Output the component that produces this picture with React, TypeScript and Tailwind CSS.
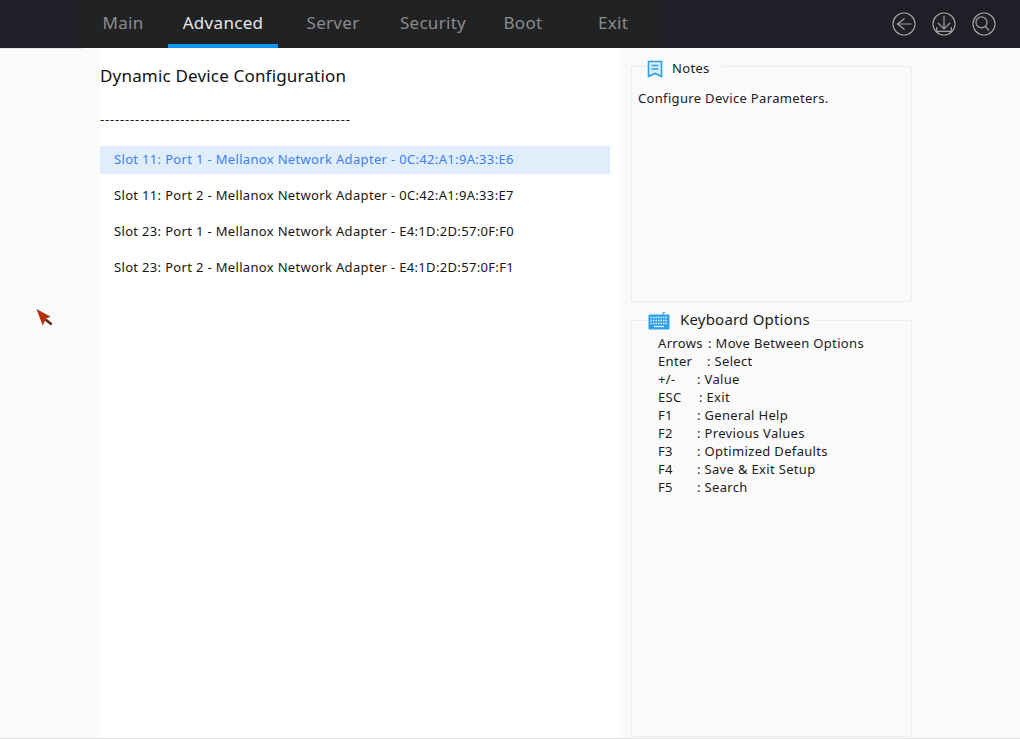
import React from 'react';

const tabs = ['Main', 'Advanced', 'Server', 'Security', 'Boot', 'Exit'];

const tabWidths: Record<string, string> = {
  Main: 'w-[90px]',
  Advanced: 'w-[110px]',
  Server: 'w-[110px]',
  Security: 'w-[90px]',
  Boot: 'w-[90px]',
  Exit: 'w-[90px]',
};

const devices = [
  'Slot 11: Port 1 - Mellanox Network Adapter - 0C:42:A1:9A:33:E6',
  'Slot 11: Port 2 - Mellanox Network Adapter - 0C:42:A1:9A:33:E7',
  'Slot 23: Port 1 - Mellanox Network Adapter - E4:1D:2D:57:0F:F0',
  'Slot 23: Port 2 - Mellanox Network Adapter - E4:1D:2D:57:0F:F1',
];

const keys = [
  { name: 'Arrows', desc: 'Move Between Options', width: 'w-[50px]' },
  { name: 'Enter', desc: 'Select', width: 'w-[49px]' },
  { name: '+/-', desc: 'Value', width: 'w-[39px]' },
  { name: 'ESC', desc: 'Exit', width: 'w-[41px]' },
  { name: 'F1', desc: 'General Help', width: 'w-[39px]' },
  { name: 'F2', desc: 'Previous Values', width: 'w-[39px]' },
  { name: 'F3', desc: 'Optimized Defaults', width: 'w-[39px]' },
  { name: 'F4', desc: 'Save & Exit Setup', width: 'w-[39px]' },
  { name: 'F5', desc: 'Search', width: 'w-[39px]' },
];

const BackIcon = () => (
  <svg width="24" height="24" viewBox="0 0 24 24" fill="none" stroke="#a0a0a2" strokeWidth="1.2">
    <circle cx="12" cy="12" r="11" />
    <path d="M12.5 6.5L5.5 12l7 5.5M5.5 12h14" />
  </svg>
);

const SaveIcon = () => (
  <svg width="24" height="24" viewBox="0 0 24 24" fill="none" stroke="#a0a0a2" strokeWidth="1.2">
    <circle cx="12" cy="12" r="11" />
    <path d="M12 3.7v13M6 11l6 6 6-6M4.7 15v4.4h14.6V15" />
  </svg>
);

const SearchIcon = () => (
  <svg width="24" height="24" viewBox="0 0 24 24" fill="none" stroke="#a0a0a2" strokeWidth="1.2">
    <circle cx="12" cy="12" r="11" />
    <circle cx="9.5" cy="10.4" r="5.5" />
    <path d="M13.4 14.5l3.6 4" />
  </svg>
);

const NotesIcon = () => (
  <svg width="16" height="18" viewBox="0 0 16 18" fill="none" stroke="#2f9fe8" strokeWidth="1.6">
    <path d="M1.5 1.5h13v15l-6.5-3-6.5 3z" fill="#d8eefb" />
    <path d="M4.5 5.5h7M4.5 9h7" />
  </svg>
);

const KeyboardIcon = () => (
  <svg width="22" height="19" viewBox="0 0 22 19" fill="none">
    <path d="M15 4V1.5h2" stroke="#2f9fe8" strokeWidth="1" />
    <rect x="0.5" y="3.5" width="21" height="15" rx="1" fill="#2f9fe8" />
    <path
      d="M2.5 6.5h17M2.5 9.5h17M2.5 12.5h17"
      stroke="#e3f3fd"
      strokeWidth="1.3"
      strokeDasharray="1.5 1"
    />
    <path d="M6 15.5h10" stroke="#e3f3fd" strokeWidth="1.3" />
  </svg>
);

const Cursor = () => (
  <svg className="absolute left-[36px] top-[308px]" width="18" height="20" viewBox="0 0 18 20">
    <path d="M9.5 11.5l6.2 5" stroke="#5e2417" strokeWidth="2.4" />
    <path d="M.5 1l14.2 7.7-4.7 1.8-3.3 7.2z" fill="#b5310f" />
  </svg>
);

export default function App() {
  return (
    <div className="relative flex flex-col h-[739px] w-[1020px] overflow-hidden bg-[#fafafa] font-['Noto_Sans',sans-serif] text-[13px] tracking-[0.33px] text-[#1c1c1c]">
      <header className="flex h-12 bg-[#1f2027] shrink-0">
        <nav className="flex ml-[78px] bg-[#212224]">
          {tabs.map((t) => (
            <div
              key={t}
              className={`${tabWidths[t]} flex items-center justify-center text-[17px] tracking-[0.3px] ${
                t === 'Advanced'
                  ? 'text-[#e6e6e6] border-b-[4px] border-[#0c96f0] pt-[2px]'
                  : 'text-[#8b8b8b] pb-[3px]'
              }`}
            >
              {t}
            </div>
          ))}
        </nav>
        <div className="ml-auto flex items-center gap-4 pr-[24px] pb-[1px]">
          <BackIcon />
          <SaveIcon />
          <SearchIcon />
        </div>
      </header>

      <div className="flex flex-1 border-b border-[#dedede]">
        <aside className="w-[100px] shrink-0">
          <div className="w-[82px] border-t border-[#e4e4e4]" />
        </aside>

        <main className="w-[520px] shrink-0 bg-white pr-[10px]">
          <h1 className="mt-[16px] h-6 text-[17px] leading-6 tracking-[0.18px] text-[#111]">
            Dynamic Device Configuration
          </h1>
          <div className="mt-[22px] h-[18px] w-[250px] overflow-hidden whitespace-nowrap leading-[18px] tracking-[0.83px]">
            {'-'.repeat(50)}
          </div>
          <ul className="mt-[18px] flex flex-col gap-2">
            {devices.map((d, i) => (
              <li
                key={d}
                className={`h-7 pl-[14px] leading-[26px] whitespace-nowrap ${
                  i === 0 ? 'bg-[#dfeefa] text-[#3d7ff5]' : 'text-[#161616]'
                }`}
              >
                {d}
              </li>
            ))}
          </ul>
        </main>

        <aside className="flex flex-1 flex-col pl-[11px] pt-[18px]">
          <section className="w-[281px] h-[236px] border border-[#ececec] rounded-[2px] px-[6px]">
            <div className="-mt-[8px] ml-[9px] flex w-fit items-center gap-[9px] bg-[#fafafa] pr-3 h-[20px]">
              <NotesIcon />
              <span>Notes</span>
            </div>
            <p className="mt-[10px] leading-[18px]">Configure Device Parameters.</p>
          </section>

          <section className="mt-[18px] w-[281px] h-[417px] border border-[#ececec] rounded-[2px] pl-[26px]">
            <div className="-mt-[11px] -ml-[10px] flex w-fit items-center gap-[10px] h-[20px] bg-[#fafafa] pr-1">
              <KeyboardIcon />
              <span className="text-[15px] tracking-[0.2px] -mt-[2px]">Keyboard Options</span>
            </div>
            <div className="mt-[4px] leading-[18px]">
              {keys.map((k) => (
                <div key={k.name} className="flex whitespace-pre">
                  <span className={k.width}>{k.name}</span>
                  <span>: {k.desc}</span>
                </div>
              ))}
            </div>
          </section>
        </aside>
      </div>

      <Cursor />
    </div>
  );
}
